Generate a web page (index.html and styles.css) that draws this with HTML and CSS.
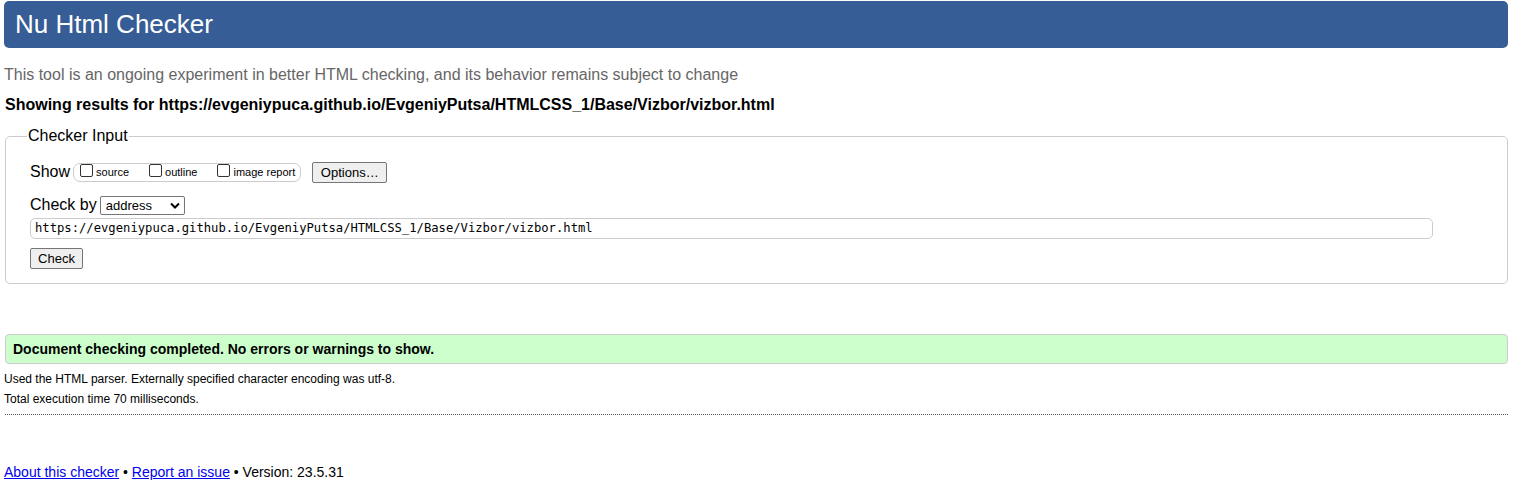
FILE: index.html
```html
<!DOCTYPE html>
<html>
<head>
<meta charset="utf-8">
<title>Nu Html Checker</title>
<link rel="stylesheet" href="styles.css">
</head>
<body>
<h1 class="title">Nu Html Checker</h1>
<p class="intro">This tool is an ongoing experiment in better HTML checking, and its behavior remains subject to change</p>
<p class="showing">Showing results for https://evgeniypuca.github.io/EvgeniyPutsa/HTMLCSS_1/Base/Vizbor/vizbor.html</p>
<fieldset class="input-box">
  <legend class="legend">Checker Input</legend>
  <div class="row show-row">
    <span class="label">Show</span>
    <span class="opts">
      <label class="opt"><input type="checkbox" class="cb">source</label>
      <label class="opt"><input type="checkbox" class="cb">outline</label>
      <label class="opt"><input type="checkbox" class="cb">image report</label>
    </span>
    <button class="btn options">Options…</button>
  </div>
  <div class="row by-row">
    <span class="label">Check by</span>
    <span class="select">address<svg class="chev" width="10" height="7" viewBox="0 0 10 7"><path d="M1 1.5 L5 5.5 L9 1.5" fill="none" stroke="#000" stroke-width="2"/></svg></span>
  </div>
  <div class="url">https://evgeniypuca.github.io/EvgeniyPutsa/HTMLCSS_1/Base/Vizbor/vizbor.html</div>
  <button class="btn check">Check</button>
</fieldset>
<div class="success">Document checking completed. No errors or warnings to show.</div>
<p class="details">Used the HTML parser. Externally specified character encoding was utf-8.</p>
<p class="details">Total execution time 70 milliseconds.</p>
<div class="rule"></div>
<p class="footer"><a href="#">About this checker</a> • <a href="#">Report an issue</a> • Version: 23.5.31</p>
</body>
</html>
```
FILE: styles.css
```css
html, body { background: #fff; }
body {
  margin: 0;
  padding: 1px 7px 0 4px;
  font-family: "Liberation Sans", Arial, sans-serif;
  color: #000;
}
.title {
  margin: 0;
  height: 47px;
  background: #365d95;
  color: #fff;
  border-radius: 5px;
  font-weight: normal;
  font-size: 26px;
  line-height: 47px;
  padding-left: 11px;
}
.intro {
  margin: 17px 0 0 0;
  font-size: 16px;
  line-height: 20px;
  color: #666;
}
.showing {
  margin: 10px 0 0 1px;
  font-size: 16px;
  line-height: 20px;
  font-weight: bold;
  color: #000;
}
.input-box {
  margin: 12px 0 0 1px;
  padding: 14px 25px 14px 24px;
  border: 1px solid #ccc;
  border-radius: 5px;
  min-width: 0;
}
.legend {
  font-size: 16px;
  padding: 0 1px;
  margin-left: -3px;
  color: #000;
}
.row {
  display: flex;
  align-items: center;
}
.label {
  font-size: 16px;
  line-height: 20px;
}
.show-row { height: 22px; margin-top: 2px; }
.opts {
  display: inline-flex;
  align-items: center;
  margin-left: 3px;
  border: 1px solid #ccc;
  border-radius: 7px;
  height: 17px;
  padding: 0 5px 0 6px;
}
.opt {
  display: inline-flex;
  align-items: center;
  font-size: 11px;
  margin-right: 20px;
}
.opt:last-child { margin-right: 0; }
.cb {
  margin: 0 3px 0 0;
  width: 13px;
  height: 13px;
  appearance: none;
  -webkit-appearance: none;
  border: 1px solid #333;
  border-radius: 2px;
  background: #fff;
  position: relative;
  top: -2px;
}
.btn {
  font-family: "Liberation Sans", Arial, sans-serif;
  font-size: 13px;
  background: #efefef;
  border: 1px solid #767676;
  border-radius: 2px;
  color: #000;
  padding: 0 8px;
  height: 21px;
}
.options { margin-left: 11px; width: 75px; padding: 0; }
.by-row { margin-top: 12px; height: 20px; }
.select {
  display: inline-flex;
  align-items: center;
  justify-content: space-between;
  box-sizing: border-box;
  width: 85px;
  height: 19px;
  margin-left: 3px;
  border: 1px solid #767676;
  border-radius: 2px;
  font-size: 13px;
  padding: 0 4px 0 5px;
}
.chev { display: block; }
.url {
  margin-top: 3px;
  box-sizing: border-box;
  width: 1403px;
  height: 21px;
  border: 1px solid #ccc;
  border-radius: 5px;
  font-family: "DejaVu Sans Mono", "Liberation Mono", monospace;
  font-size: 12.2px;
  line-height: 19px;
  padding-left: 4px;
  color: #000;
}
.check {
  display: block;
  margin-top: 9px;
  width: 53px;
  padding: 0;
}
.success {
  margin-top: 50px;
  box-sizing: border-box;
  height: 30px;
  background: #ccffcc;
  border: 1px solid #ccc;
  border-radius: 4px;
  margin-left: 1px;
  font-size: 14px;
  font-weight: bold;
  line-height: 28px;
  padding-left: 7px;
}
.details {
  margin: 0;
  font-size: 12px;
  line-height: 20px;
}
.success + .details { margin-top: 5px; }
.rule {
  margin-top: 5px;
  margin-left: 1px;
  border-top: 1px dotted #555;
}
.footer {
  margin: 48px 0 0 0;
  font-size: 14px;
  line-height: 18px;
  color: #000;
}
.footer a { color: #00e; text-decoration: underline; }
```
